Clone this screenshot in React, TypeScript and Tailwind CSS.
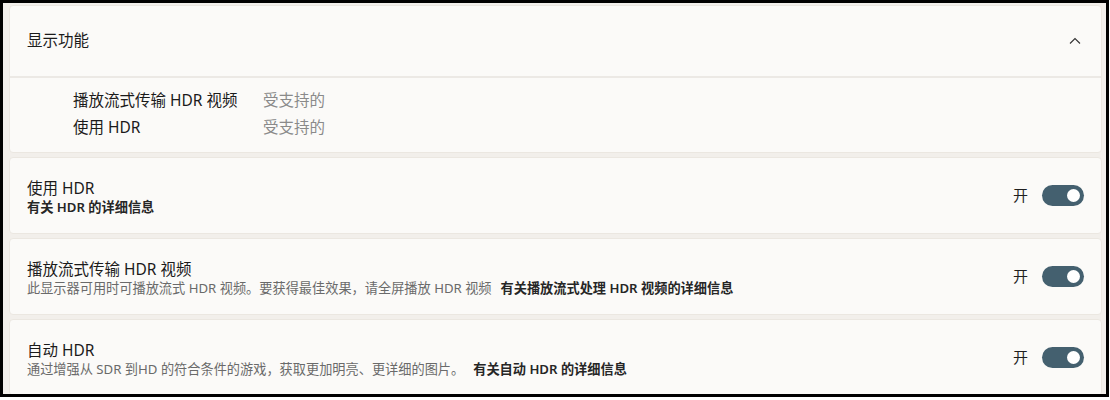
import React from 'react';

const font = { fontFamily: '"Noto Sans", "Noto Sans CJK SC", sans-serif' };

interface ToggleRowProps {
  title: string;
  desc?: string;
  link: string;
}

const Toggle: React.FC = () => (
  <div className="flex items-center gap-[14px]">
    <span className="text-[15px] text-[#1f1f1f]">开</span>
    <div className="w-[42px] h-[21px] rounded-full bg-[#44606f] flex items-center justify-end pr-[4px]">
      <div className="w-[13px] h-[13px] rounded-full bg-white" />
    </div>
  </div>
);

const ToggleRow: React.FC<ToggleRowProps> = ({ title, desc, link }) => (
  <div className="h-[77px] shrink-0 rounded-[4px] border border-[#ebe7e1] bg-[#fbfaf8] flex items-center justify-between pl-[17px] pr-[17px]">
    <div className="flex flex-col pt-[3px]">
      <div className="text-[15.5px] leading-[20px] text-[#1b1b1b]">{title}</div>
      <div className="text-[13.2px] leading-[18px] text-[#6a6a6a]">
        {desc && <span className="mr-[9px]">{desc}</span>}
        <span className="font-semibold text-[#262626]">{link}</span>
      </div>
    </div>
    <Toggle />
  </div>
);

export default function App() {
  return (
    <div style={font} className="w-[1109px] h-[397px] border-[3px] border-black bg-[#f2efeb] overflow-hidden">
      <div className="flex flex-col gap-[4px] pl-[6px] pr-[4px] pt-[2px]">
        <div className="rounded-[4px] border border-[#ebe7e1] bg-[#fbfaf8]">
          <div className="h-[72px] flex items-center justify-between pl-[17px] pr-[19px] border-b-2 border-[#ece9e5]">
            <span className="text-[15.5px] text-[#1b1b1b]">显示功能</span>
            <svg width="14" height="14" viewBox="0 0 14 14" fill="none">
              <path d="M2 9.5 L7 4.5 L12 9.5" stroke="#333" strokeWidth="1.1" />
            </svg>
          </div>
          <div className="pl-[63px] pt-[9px] pb-[11px] text-[15.5px] leading-[27px]">
            <div className="flex">
              <span className="w-[190px] text-[#1b1b1b]">播放流式传输 HDR 视频</span>
              <span className="text-[#8a8a8a]">受支持的</span>
            </div>
            <div className="flex">
              <span className="w-[190px] text-[#1b1b1b]">使用 HDR</span>
              <span className="text-[#8a8a8a]">受支持的</span>
            </div>
          </div>
        </div>
        <ToggleRow title="使用 HDR" link="有关 HDR 的详细信息" />
        <ToggleRow
          title="播放流式传输 HDR 视频"
          desc="此显示器可用时可播放流式 HDR 视频。要获得最佳效果，请全屏播放 HDR 视频"
          link="有关播放流式处理 HDR 视频的详细信息"
        />
        <ToggleRow
          title="自动 HDR"
          desc="通过增强从 SDR 到HD 的符合条件的游戏，获取更加明亮、更详细的图片。"
          link="有关自动 HDR 的详细信息"
        />
      </div>
    </div>
  );
}
